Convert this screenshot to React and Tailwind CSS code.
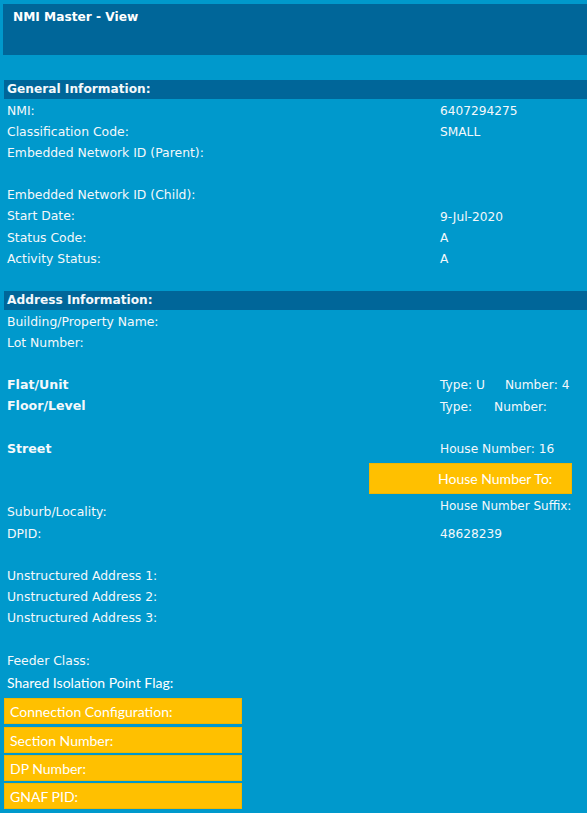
import React from 'react';

const tahoma = { fontFamily: '"DejaVu Sans", Verdana, sans-serif' };
const calibri = { fontFamily: 'Lato, "Open Sans", sans-serif' };

function Row({ label, value, bold }) {
    return (
        <div className="flex h-[21.15px] items-center pt-[3px]">
            <div className={`w-[436px] pl-[3px] ${bold ? 'font-bold text-[12.6px]' : 'text-[12.4px]'}`}>{label}</div>
            <div className="text-[12.2px]">{value}</div>
        </div>
    );
}

function Blank() {
    return <div className="h-[21.15px]" />;
}

function SectionBar({ title }) {
    return (
        <div className="h-[19px] bg-[#006699] pl-[3px] font-bold text-[12.2px] flex items-center">{title}</div>
    );
}

function YellowBox({ children, className = '' }) {
    return (
        <div
            className={`bg-[#ffc000] border border-[#f2b600] flex items-center pl-[5px] text-[14px] text-white ${className}`}
            style={calibri}
        >
            {children}
        </div>
    );
}

export default function App() {
    return (
        <div className="w-[587px] h-[813px] bg-[#0099cc] text-[#f4f8fb] text-[12px] overflow-hidden" style={tahoma}>
            {/* Page header */}
            <div className="pt-[4px] pl-[3px]">
                <div className="h-[51px] bg-[#006699] pl-[10px] pt-[4px] font-bold text-[12.2px] text-white">
                    NMI Master - View
                </div>
            </div>

            <div className="pl-[4px] pt-[25px]">
                {/* General information */}
                <SectionBar title="General Information:" />
                <Row label="NMI:" value="6407294275" />
                <Row label="Classification Code:" value="SMALL" />
                <Row label="Embedded Network ID (Parent):" value="" />
                <Blank />
                <Row label="Embedded Network ID (Child):" value="" />
                <Row label="Start Date:" value="9-Jul-2020" />
                <Row label="Status Code:" value="A" />
                <Row label="Activity Status:" value="A" />
                <div className="h-[23px]" />

                {/* Address information */}
                <SectionBar title="Address Information:" />
                <Row label="Building/Property Name:" value="" />
                <Row label="Lot Number:" value="" />
                <Blank />
                <Row label="Flat/Unit" value={<span>Type: U<span className="pl-[20px]">Number: 4</span></span>} bold />
                <Row label="Floor/Level" value={<span>Type:<span className="pl-[22px]">Number:</span></span>} bold />
                <Blank />
                <Row label="Street" value="House Number: 16" bold />

                <div className="flex h-[36px] items-end">
                    <div className="w-[365px]" />
                    <YellowBox className="w-[203px] h-[31px] pl-[68px]">House Number To:</YellowBox>
                </div>

                <div className="flex h-[28px]">
                    <div className="w-[436px] pl-[3px] pt-[9px] text-[12.4px]">Suburb/Locality:</div>
                    <div className="pt-[3px] text-[12px]">House Number Suffix:</div>
                </div>
                <Row label="DPID:" value="48628239" />
                <Blank />
                <Row label="Unstructured Address 1:" value="" />
                <Row label="Unstructured Address 2:" value="" />
                <Row label="Unstructured Address 3:" value="" />
                <Blank />
                <Row label="Feeder Class:" value="" />
                <div className="h-[24px] pl-[3px] flex items-center text-[14px] text-white" style={calibri}>
                    Shared Isolation Point Flag:
                </div>

                <div className="flex flex-col w-[238px]">
                    <YellowBox className="h-[26px] mt-[4px]">Connection Configuration:</YellowBox>
                    <YellowBox className="h-[26px] mt-[3px]">Section Number:</YellowBox>
                    <YellowBox className="h-[26px] mt-[2px]">DP Number:</YellowBox>
                    <YellowBox className="h-[26px] mt-[2px]">GNAF PID:</YellowBox>
                </div>
            </div>
        </div>
    );
}
